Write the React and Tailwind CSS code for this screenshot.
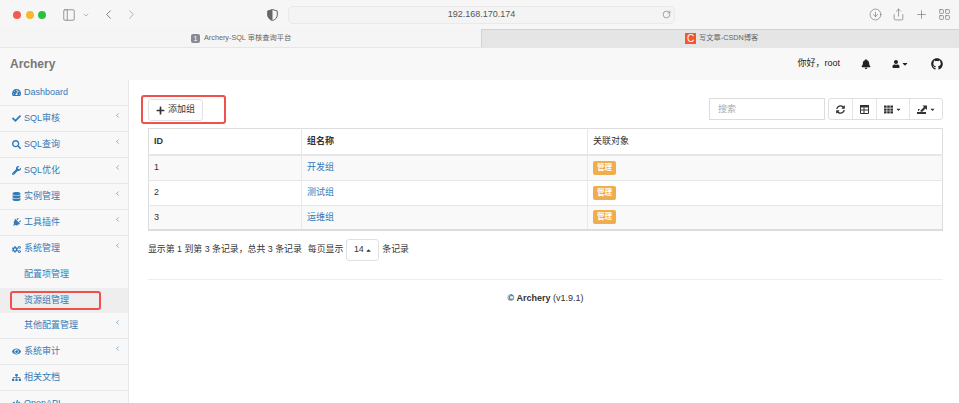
import { FaTachometerAlt, FaCheck, FaSearch, FaWrench, FaDatabase, FaPlug, FaCogs, FaEye, FaSitemap, FaCode, FaBell, FaUser, FaGithub, FaSyncAlt, FaTh, FaPlus, FaCaretDown, FaCaretUp } from 'react-icons/fa'
import { ChevronLeft, ChevronRight, ChevronDown, RotateCw, ArrowDownCircle, Share, Plus, LayoutGrid, PanelLeft } from 'lucide-react'

const MENU = [
  { label: 'Dashboard', icon: FaTachometerAlt },
  { label: 'SQL审核', icon: FaCheck, arrow: true },
  { label: 'SQL查询', icon: FaSearch, arrow: true },
  { label: 'SQL优化', icon: FaWrench, arrow: true },
  { label: '实例管理', icon: FaDatabase, arrow: true },
  { label: '工具插件', icon: FaPlug, arrow: true, tilt: true },
  { label: '系统管理', icon: FaCogs, arrow: true, noBorder: true },
  { label: '配置项管理', sub: true, noBorder: true },
  { label: '资源组管理', sub: true, active: true, noBorder: true, short: true },
  { label: '其他配置管理', sub: true, arrow: true },
  { label: '系统审计', icon: FaEye, arrow: true },
  { label: '相关文档', icon: FaSitemap },
  { label: 'OpenAPI', icon: FaCode },
]

const ROWS = [
  { id: 1, name: '开发组' },
  { id: 2, name: '测试组' },
  { id: 3, name: '运维组' },
]

function BrowserBar() {
  return (
    <div className="h-[29px] bg-[#f6f6f6] flex items-center text-[#6f6f6f] relative">
      <div className="flex gap-[4.5px] pl-[13px] w-[60px]">
        <span className="w-2 h-2 rounded-full bg-[#f25b50]" />
        <span className="w-2 h-2 rounded-full bg-[#f8b82e]" />
        <span className="w-2 h-2 rounded-full bg-[#2dc03f]" />
      </div>
      <PanelLeft size={14} strokeWidth={1.2} className="ml-[2px]" />
      <ChevronDown size={8} className="ml-[6px] text-[#999]" />
      <ChevronLeft size={15} strokeWidth={1.4} className="ml-[11px]" />
      <ChevronRight size={15} strokeWidth={1.4} className="ml-[8px] text-[#aaa]" />
      <svg width="11" height="12" viewBox="0 0 11 12" className="ml-[128px]">
        <path d="M5.5 .5 L10.3 2 V6 C10.3 8.8 8 10.8 5.5 11.6 C3 10.8 .7 8.8 .7 6 V2 Z" fill="none" stroke="#666" strokeWidth="1" />
        <path d="M5.5 .5 V11.6 C3 10.8 .7 8.8 .7 6 V2 Z" fill="#666" />
      </svg>
      <div className="ml-[10px] w-[387px] h-[18px] rounded-[5px] border border-[#e9e9e9] bg-[#f4f4f4] flex items-center justify-center relative text-[9px] text-[#555]">
        192.168.170.174
        <RotateCw size={9} className="absolute right-[3px] text-[#888]" />
      </div>
      <div className="ml-auto flex items-center gap-[10px] pr-[8px]">
        <ArrowDownCircle size={13} strokeWidth={1.2} />
        <Share size={13} strokeWidth={1.2} />
        <Plus size={13} strokeWidth={1.2} />
        <LayoutGrid size={13} strokeWidth={1.2} />
      </div>
    </div>
  )
}

function TabStrip() {
  return (
    <div className="h-[19px] flex text-[7.25px] text-[#666] border-b border-[#e6e6e6]">
      <div className="w-[481px] bg-[#f5f5f5] flex items-center pl-[191px] gap-[4px]">
        <span className="w-[9px] h-[9px] rounded-[2px] bg-[#8a8a96] text-white text-[7px] leading-[9px] text-center">1</span>
        Archery-SQL 审核查询平台
      </div>
      <div className="flex-1 bg-[#e5e5e5] border-t border-l border-[#d2d2d2] flex items-center pl-[203px] gap-[3px]">
        <span className="w-[11px] h-[11px] bg-[#f1582f] text-white text-[10px] leading-[11px] text-center">C</span>
        写文章-CSDN博客
      </div>
    </div>
  )
}

function Navbar() {
  return (
    <div className="h-[32px] bg-[#f8f8f8] flex items-center text-[#222]">
      <span className="pl-[10px] text-[12px] font-bold text-[#777]">Archery</span>
      <div className="ml-auto flex items-center text-[9px] pr-[16px]">
        <span>你好，root</span>
        <FaBell size={10} className="ml-[21px]" />
        <FaUser size={8} className="ml-[21px]" />
        <FaCaretDown size={8} className="ml-[1px]" />
        <FaGithub size={12} className="ml-[22px]" />
      </div>
    </div>
  )
}

function Sidebar() {
  return (
    <aside className="w-[129px] shrink-0 bg-[#f8f8f8] border-r border-[#e7e7e7] text-[#337ab7] text-[9px]">
      {MENU.map(item => {
        const Icon = item.icon
        return (
          <div
            key={item.label}
            className={`flex items-center relative ${item.short ? 'h-[25px]' : 'h-[26px]'} ${item.noBorder ? '' : 'border-b border-[#e7e7e7]'} ${item.active ? 'bg-[#eeeeee]' : ''} ${item.sub ? 'pl-[24px]' : 'pl-[12px]'}`}
          >
            {Icon && (
              <span className="w-[12px] flex justify-start">
                <Icon size={9} className={item.tilt ? 'rotate-45' : ''} />
              </span>
            )}
            <span>{item.label}</span>
            {item.arrow && <ChevronLeft size={7} strokeWidth={2} className="absolute left-[114px] top-[6px]" />}
          </div>
        )
      })}
    </aside>
  )
}

function Toolbar() {
  return (
    <div className="flex items-center justify-between h-[22px] mb-[7px]">
      <button className="h-[22px] w-[55px] border border-[#e2e2e2] rounded-[3px] bg-white text-[9px] text-[#333] flex items-center justify-center gap-[3px]">
        <FaPlus size={9} />
        添加组
      </button>
      <div className="flex items-center text-[#333] mb-[2px]">
        <input
          placeholder="搜索"
          className="w-[116px] h-[22px] border border-[#dcdcdc] px-[8px] text-[9px] placeholder:text-[#aaa] outline-none mr-[3px]"
        />
        <div className="flex h-[22px] border border-[#dfdfdf] rounded-[3px] divide-x divide-[#e4e4e4]">
          <span className="w-[24px] flex items-center justify-center"><FaSyncAlt size={9} /></span>
          <span className="w-[24px] flex items-center justify-center">
            <svg width="9" height="9" viewBox="0 0 9 9">
              <path d="M0 0h9v2.5H0z" fill="#333" />
              <path d="M.5 .5h8v8h-8z M.5 5h8 M4 2.5v6" fill="none" stroke="#333" strokeWidth="1" />
            </svg>
          </span>
          <span className="w-[33px] flex items-center justify-center gap-[2px]"><FaTh size={9} /><FaCaretDown size={7} /></span>
          <span className="w-[32px] flex items-center justify-center gap-[2px]">
            <svg width="10" height="10" viewBox="0 0 10 10">
              <path d="M0 8h9v2H0z M1 7.5V5h2L1 7.5z M3 7 L7 3 L5.5 1.5 H10 V6 L8.5 4.5 L5 8z" fill="#333" />
            </svg>
            <FaCaretDown size={7} />
          </span>
        </div>
      </div>
    </div>
  )
}

function GroupTable() {
  return (
    <table className="w-[795px] table-fixed border border-[#dddddd] border-b-2 text-[9px] text-[#333] border-collapse">
      <colgroup>
        <col className="w-[153px]" />
        <col className="w-[286px]" />
        <col />
      </colgroup>
      <thead>
        <tr className="h-[26.5px] font-bold text-left">
          <th className="px-[5px] border-r border-b-2 border-[#e6e6e6]">ID</th>
          <th className="px-[5px] border-r border-b-2 border-[#e6e6e6]">组名称</th>
          <th className="px-[5px] border-b-2 border-[#e6e6e6] font-normal">关联对象</th>
        </tr>
      </thead>
      <tbody>
        {ROWS.map(row => (
          <tr key={row.id} className={`h-[25px] ${row.id % 2 ? 'bg-[#f9f9f9]' : 'bg-white'} border-b border-[#e6e6e6]`}>
            <td className="px-[5px] border-r border-[#e9e9e9]">{row.id}</td>
            <td className="px-[5px] border-r border-[#e9e9e9] text-[#337ab7]">{row.name}</td>
            <td className="px-[5px]">
              <span className="inline-block w-[23px] h-[14px] rounded-[2px] bg-[#f0ad4e] text-white text-[7.5px] font-bold leading-[14px] text-center align-middle">管理</span>
            </td>
          </tr>
        ))}
      </tbody>
    </table>
  )
}

export default function App() {
  return (
    <div className="w-[959px] h-[403px] overflow-hidden bg-white relative" style={{ fontFamily: '"Liberation Sans", "Noto Sans CJK SC", sans-serif' }}>
      <BrowserBar />
      <TabStrip />
      <Navbar />
      <div className="flex">
        <Sidebar />
        <main className="flex-1 pl-[19px] pt-[19px] pr-[16px]">
          <Toolbar />
          <GroupTable />
          <div className="flex items-center h-[22px] mt-[8px] text-[8.9px] text-[#333]">
            <span>显示第 1 到第 3 条记录，总共 3 条记录</span>
            <span className="ml-[6px]">每页显示</span>
            <span className="ml-[3px] w-[33px] h-[22px] border border-[#e0e0e0] rounded-[3px] flex items-center justify-center gap-[1px]">
              14 <FaCaretUp size={7} />
            </span>
            <span className="ml-[3px]">条记录</span>
          </div>
          <div className="mt-[18px] border-t border-[#eeeeee] pt-[12px] text-center text-[9px] font-bold text-[#333]">
            © Archery <span className="font-normal">(v1.9.1)</span>
          </div>
        </main>
      </div>
      {/* red annotations drawn over the screenshot */}
      <div className="absolute left-[141px] top-[95px] w-[85px] h-[29px] border-2 border-[#f0504e] rounded-[3px]" />
      <div className="absolute left-[10px] top-[291px] w-[91px] h-[19px] border-2 border-[#f0504e] rounded-[3px]" />
    </div>
  )
}
